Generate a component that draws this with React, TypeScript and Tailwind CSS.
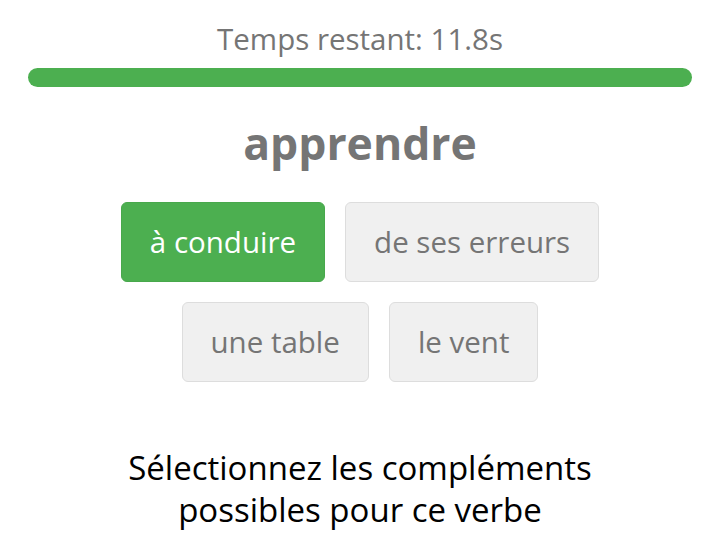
import React from "react";

export default function App() {
  return (
    <div className="w-[720px] h-[540px] bg-white flex flex-col items-center" style={{ fontFamily: '"Open Sans", "Noto Sans", sans-serif' }}>
      <div className="mt-[19px] text-[29.5px] leading-[40px] text-[#757575]">Temps restant: 11.8s</div>
      <div className="mt-[9px] w-[664px] h-[19px] rounded-full bg-[#4caf50]" />
      <div className="mt-[26px] text-[44.5px] leading-[60px] font-bold text-[#757575]">apprendre</div>
      <div className="mt-[29px] w-[600px] flex flex-wrap justify-center gap-[20px]">
        <button className="h-[80px] px-[28px] rounded-[6px] border border-[#48a84c] bg-[#4caf50] text-white text-[29.5px]">à conduire</button>
        <button className="h-[80px] px-[28px] rounded-[6px] border border-[#dddddd] bg-[#f0f0f0] text-[#757575] text-[29.5px]">de ses erreurs</button>
        <button className="h-[80px] px-[28px] rounded-[6px] border border-[#dddddd] bg-[#f0f0f0] text-[#757575] text-[29.5px]">une table</button>
        <button className="h-[80px] px-[28px] rounded-[6px] border border-[#dddddd] bg-[#f0f0f0] text-[#757575] text-[29.5px]">le vent</button>
      </div>
      <div className="mt-[65px] text-[33px] leading-[42px] text-black text-center w-[560px]">Sélectionnez les compléments possibles pour ce verbe</div>
    </div>
  );
}
